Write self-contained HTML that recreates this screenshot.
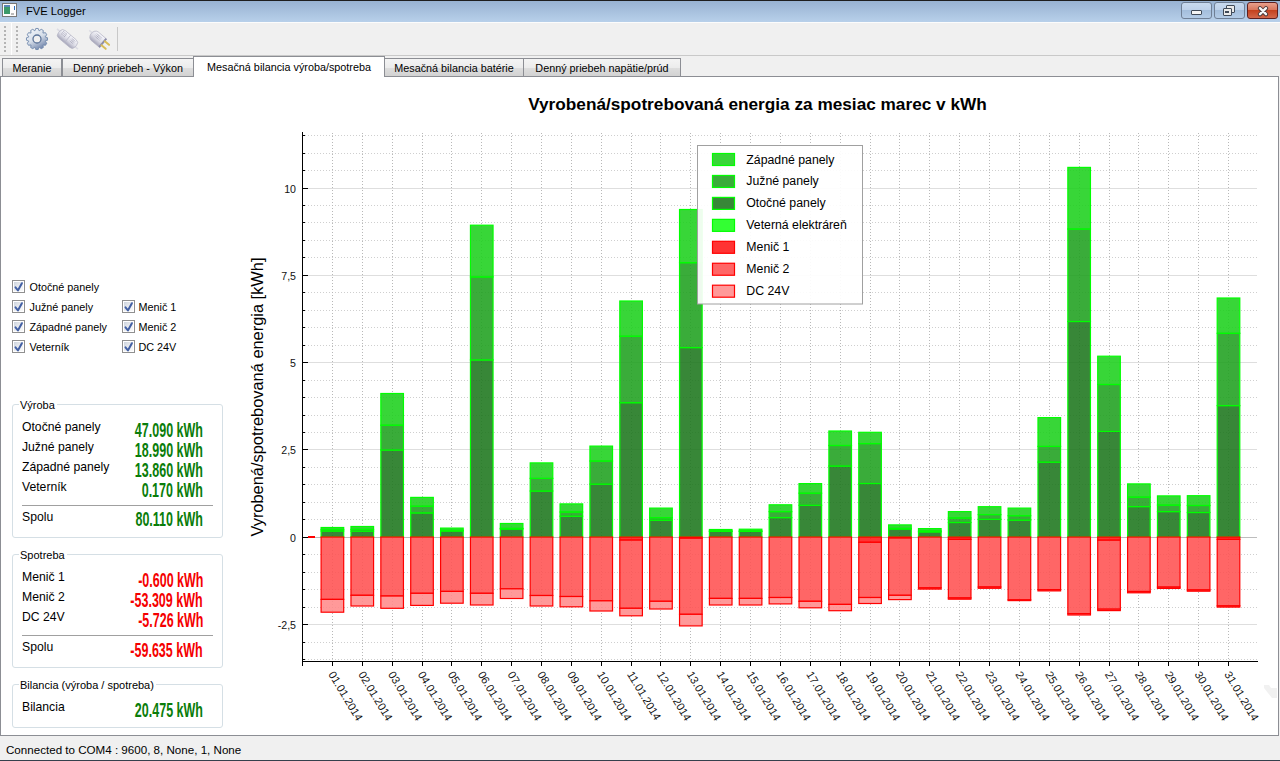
<!DOCTYPE html>
<html><head><meta charset="utf-8">
<style>
*{box-sizing:border-box}
html,body{margin:0;padding:0;width:1280px;height:761px;overflow:hidden;background:#f0f0f0;font-family:"Liberation Sans",sans-serif;color:#000}
.a{position:absolute;white-space:nowrap}
#topline{left:0;top:0;width:1280px;height:1px;background:#1e1e1e}
#titlebar{left:0;top:1px;width:1280px;height:21px;background:linear-gradient(#98b2d2,#b8d0ea)}
#titlebar .t{left:26px;top:3px;font-size:11.2px;color:#000;line-height:14px}
.wbtn{top:2px;height:17px;border:1px solid #6f7f95;border-radius:3px;background:linear-gradient(#c8daef 0%,#bdd1ea 45%,#a4bedc 50%,#b3cbe6 100%)}
#wclose{border-color:#5e2020;background:linear-gradient(#e8a08c 0%,#d8765c 45%,#c4421f 50%,#d3684b 100%)}
#toolbar{left:0;top:22px;width:1280px;height:34px;background:#f0f0f0;border-top:1px solid #fcfcfc;border-bottom:1px solid #c9c9c9}
.grip{width:3px;height:3px;background:#b4b4b4}
.tab{top:58px;height:18px;border:1px solid #8c8e94;border-bottom:none;background:linear-gradient(#f4f4f4 0%,#ececec 50%,#dedede 51%,#d2d2d2 100%);font-size:10.8px;line-height:18px;padding-left:0;text-align:center}
.tab.sel{top:56px;height:21px;background:#fff;z-index:3;line-height:20px}
#pane{left:0;top:76px;width:1279px;height:660px;background:#fff;border:1px solid #8c8e94}
#status{left:6px;top:743px;font-size:11.6px;line-height:14px}
#botline{left:0;top:760px;width:1280px;height:1px;background:#35404c}
.cb{width:13px;height:13px;border:1px solid #8f8f8f;background:#fff}
.cb:before{content:"";position:absolute;left:1px;top:1px;width:9px;height:9px;background:linear-gradient(135deg,#cdd3dc,#eef0f3 60%,#f8f8f8)}
.cb svg{position:absolute;left:1px;top:1px}
.cbl{font-size:10.8px;line-height:13px;margin-top:1px;margin-left:-0.5px}
.gb{border:1px solid #d5dfe5;border-radius:3px}
.gt{font-size:11px;line-height:12px;background:#fff;padding:0 2px 0 1px;margin-top:1px}
.lab{font-size:12.2px;line-height:14px;margin-top:1px}
.val{font-size:20px;font-weight:bold;line-height:20px;transform-origin:100% 0;transform:scaleX(0.625)}
.sep{height:1px;background:#a0a0a0}
</style></head><body>
<div class="a" id="topline"></div>
<div class="a" id="titlebar">
  <svg class="a" style="left:2px;top:2px" width="15" height="14" viewBox="0 0 15 14">
    <rect x="0.5" y="0.5" width="14" height="13" fill="#fdfdfd" stroke="#777"/>
    <rect x="2" y="3" width="6" height="8" fill="#3c9a6a"/>
    <rect x="2" y="2" width="6" height="2" fill="#5a86b8"/>
    <rect x="12" y="3" width="1" height="4" fill="#2b6fc0"/>
    <rect x="9" y="10" width="3" height="2" fill="#bbb"/>
  </svg>
  <div class="a t">FVE Logger</div>
</div>
<div class="a wbtn" style="left:1181px;width:31px"><div class="a" style="left:9px;top:7px;width:11px;height:5px;background:#f4f4f4;border:1px solid #404a58;border-radius:1px"></div></div>
<div class="a wbtn" style="left:1214px;width:31px"><div class="a" style="left:11px;top:2px;width:9px;height:8px;border:1.5px solid #404a58;background:#eaeaea;border-radius:1px"></div><div class="a" style="left:8px;top:5px;width:9px;height:8px;border:1.5px solid #404a58;background:#eaeaea;border-radius:1px"><div class="a" style="left:1px;top:2px;width:4px;height:2px;border:1px solid #404a58"></div></div></div>
<div class="a wbtn" id="wclose" style="left:1247px;width:31px"><svg class="a" style="left:9px;top:2px" width="12" height="12" viewBox="0 0 12 12"><path d="M3 3.2 L9 9.2 M9 3.2 L3 9.2" stroke="#4a3838" stroke-width="4.2" stroke-linecap="round"/><path d="M3 3.2 L9 9.2 M9 3.2 L3 9.2" stroke="#f6f6f6" stroke-width="2.4" stroke-linecap="round"/></svg></div>

<div class="a" id="toolbar"></div>
<div class="a grip" style="left:4px;top:26px;height:2px;width:2px;box-shadow:0 4px #b4b4b4,0 8px #b4b4b4,0 12px #b4b4b4,0 16px #b4b4b4,0 20px #b4b4b4,0 24px #b4b4b4"></div>
<div class="a" style="left:11px;top:23px;width:1px;height:32px;background:#c6c6c6;border-right:1px solid #fff"></div>
<div class="a grip" style="left:16px;top:26px;height:2px;width:2px;box-shadow:0 4px #b4b4b4,0 8px #b4b4b4,0 12px #b4b4b4,0 16px #b4b4b4,0 20px #b4b4b4,0 24px #b4b4b4"></div>
<!-- gear -->
<svg class="a" style="left:25px;top:27px" width="24" height="24" viewBox="0 0 24 24">
  <defs><linearGradient id="gg" x1="0.2" y1="0.1" x2="0.7" y2="1"><stop offset="0" stop-color="#eef2f7"/><stop offset="0.45" stop-color="#d6dee9"/><stop offset="1" stop-color="#6b80a8"/></linearGradient></defs>
  <path d="M9.83 3.89 L10.78 1.47 L13.22 1.47 L14.17 3.89 L14.17 3.89 L16.21 2.27 L18.32 3.49 L17.94 6.06 L17.94 6.06 L20.51 5.68 L21.73 7.79 L20.11 9.83 L20.11 9.83 L22.53 10.78 L22.53 13.22 L20.11 14.17 L20.11 14.17 L21.73 16.21 L20.51 18.32 L17.94 17.94 L17.94 17.94 L18.32 20.51 L16.21 21.73 L14.17 20.11 L14.17 20.11 L13.22 22.53 L10.78 22.53 L9.83 20.11 L9.83 20.11 L7.79 21.73 L5.68 20.51 L6.06 17.94 L6.06 17.94 L3.49 18.32 L2.27 16.21 L3.89 14.17 L3.89 14.17 L1.47 13.22 L1.47 10.78 L3.89 9.83 L3.89 9.83 L2.27 7.79 L3.49 5.68 L6.06 6.06 L6.06 6.06 L5.68 3.49 L7.79 2.27 L9.83 3.89Z" fill="url(#gg)" stroke="#7089ad" stroke-width="0.9" stroke-linejoin="round"/>
  <circle cx="12" cy="12" r="4" fill="#f0f0f0" stroke="#5c7499" stroke-width="1.3"/>
</svg>
<!-- plug 1 -->
<svg class="a" style="left:56px;top:28px" width="24" height="24" viewBox="0 0 24 24">
  <defs><linearGradient id="pg" x1="0" y1="0" x2="0" y2="1"><stop offset="0" stop-color="#f6f6fb"/><stop offset="0.55" stop-color="#dcdce6"/><stop offset="1" stop-color="#a4a4b8"/></linearGradient></defs>
  <g transform="translate(11.5 11) rotate(40)">
    <line x1="-14.5" y1="-1" x2="-10" y2="-1" stroke="#dcdce4" stroke-width="1.6"/>
    <line x1="10" y1="1" x2="14.5" y2="1" stroke="#dcdce4" stroke-width="1.6"/>
    <rect x="-11" y="-5" width="22" height="10" rx="4" fill="url(#pg)" stroke="#b4b4c4" stroke-width="0.7"/>
    <line x1="0" y1="-5" x2="0" y2="5" stroke="#b8b8c8" stroke-width="0.8"/>
    <path d="M-8 -3.2h5M-8 -1.6h5M-8 0h5M3 -3.2h5M3 -1.6h5M3 0h5" stroke="#9c9cb0" stroke-width="0.9" stroke-dasharray="1 0.7"/>
  </g>
</svg>
<!-- plug 2 -->
<svg class="a" style="left:88px;top:28px" width="24" height="24" viewBox="0 0 24 24">
  <g transform="translate(9.8 10.8) rotate(40)">
    <line x1="-12" y1="-1" x2="-7" y2="-1" stroke="#dcdce4" stroke-width="1.6"/>
    <path d="M-4 -5.5 H7 V5.5 H-4 A4.5 5.5 0 0 1 -4 -5.5Z" fill="url(#pg)" stroke="#b4b4c4" stroke-width="0.7"/>
    <rect x="5.5" y="-5.5" width="1.8" height="11" fill="#8c8ca8"/>
    <path d="M-4 -3.2h6M-4 -1.6h6M-4 0h6" stroke="#9c9cb0" stroke-width="0.9" stroke-dasharray="1 0.7"/>
    <line x1="7" y1="-2.6" x2="12.5" y2="-2.6" stroke="#d8bc58" stroke-width="2" stroke-linecap="round"/>
    <line x1="7" y1="2.6" x2="12.5" y2="2.6" stroke="#d8bc58" stroke-width="2" stroke-linecap="round"/>
  </g>
</svg>
<div class="a" style="left:117px;top:27px;width:1px;height:24px;background:#c8c8c8"></div>

<div class="a" id="pane"></div>
<div class="a tab" style="left:2px;width:60px">Meranie</div>
<div class="a tab" style="left:62px;width:132px">Denný priebeh - Výkon</div>
<div class="a tab sel" style="left:193px;width:192px">Mesačná bilancia výroba/spotreba</div>
<div class="a tab" style="left:384px;width:140px">Mesačná bilancia batérie</div>
<div class="a tab" style="left:523px;width:158px">Denný priebeh napätie/prúd</div>

<!-- checkboxes -->
<div class="a cb" style="left:12px;top:280px"><svg width="11" height="11" viewBox="0 0 11 11" overflow="visible"><path d="M1.5 5.4 L3.9 8.4 L7.9 1.2" fill="none" stroke="#4360a4" stroke-width="2" stroke-linecap="round" stroke-linejoin="round"/></svg></div>
<div class="a cbl" style="left:30px;top:280px">Otočné panely</div>
<div class="a cb" style="left:12px;top:300px"><svg width="11" height="11" viewBox="0 0 11 11" overflow="visible"><path d="M1.5 5.4 L3.9 8.4 L7.9 1.2" fill="none" stroke="#4360a4" stroke-width="2" stroke-linecap="round" stroke-linejoin="round"/></svg></div>
<div class="a cbl" style="left:30px;top:300px">Južné panely</div>
<div class="a cb" style="left:12px;top:320px"><svg width="11" height="11" viewBox="0 0 11 11" overflow="visible"><path d="M1.5 5.4 L3.9 8.4 L7.9 1.2" fill="none" stroke="#4360a4" stroke-width="2" stroke-linecap="round" stroke-linejoin="round"/></svg></div>
<div class="a cbl" style="left:30px;top:320px">Západné panely</div>
<div class="a cb" style="left:12px;top:340px"><svg width="11" height="11" viewBox="0 0 11 11" overflow="visible"><path d="M1.5 5.4 L3.9 8.4 L7.9 1.2" fill="none" stroke="#4360a4" stroke-width="2" stroke-linecap="round" stroke-linejoin="round"/></svg></div>
<div class="a cbl" style="left:30px;top:340px">Veterník</div>
<div class="a cb" style="left:122px;top:300px"><svg width="11" height="11" viewBox="0 0 11 11" overflow="visible"><path d="M1.5 5.4 L3.9 8.4 L7.9 1.2" fill="none" stroke="#4360a4" stroke-width="2" stroke-linecap="round" stroke-linejoin="round"/></svg></div>
<div class="a cbl" style="left:139px;top:300px">Menič 1</div>
<div class="a cb" style="left:122px;top:320px"><svg width="11" height="11" viewBox="0 0 11 11" overflow="visible"><path d="M1.5 5.4 L3.9 8.4 L7.9 1.2" fill="none" stroke="#4360a4" stroke-width="2" stroke-linecap="round" stroke-linejoin="round"/></svg></div>
<div class="a cbl" style="left:139px;top:320px">Menič 2</div>
<div class="a cb" style="left:122px;top:340px"><svg width="11" height="11" viewBox="0 0 11 11" overflow="visible"><path d="M1.5 5.4 L3.9 8.4 L7.9 1.2" fill="none" stroke="#4360a4" stroke-width="2" stroke-linecap="round" stroke-linejoin="round"/></svg></div>
<div class="a cbl" style="left:139px;top:340px">DC 24V</div>

<!-- Vyroba group -->
<div class="a gb" style="left:12px;top:404px;width:211px;height:134px"></div>
<div class="a gt" style="left:19px;top:398px">Výroba</div>
<div class="a lab" style="left:22px;top:419px">Otočné panely</div>
<div class="a lab" style="left:22px;top:439px">Južné panely</div>
<div class="a lab" style="left:22px;top:459px">Západné panely</div>
<div class="a lab" style="left:22px;top:479px">Veterník</div>
<div class="a sep" style="left:22px;top:505px;width:191px"></div>
<div class="a lab" style="left:22px;top:509px">Spolu</div>
<div class="a val" style="right:1077px;top:420px;color:#0a7d0a">47.090 kWh</div>
<div class="a val" style="right:1077px;top:440px;color:#0a7d0a">18.990 kWh</div>
<div class="a val" style="right:1077px;top:460px;color:#0a7d0a">13.860 kWh</div>
<div class="a val" style="right:1077px;top:480px;color:#0a7d0a">0.170 kWh</div>
<div class="a val" style="right:1077px;top:509px;color:#0a7d0a">80.110 kWh</div>

<!-- Spotreba group -->
<div class="a gb" style="left:12px;top:554px;width:211px;height:114px"></div>
<div class="a gt" style="left:19px;top:548px">Spotreba</div>
<div class="a lab" style="left:22px;top:569px">Menič 1</div>
<div class="a lab" style="left:22px;top:589px">Menič 2</div>
<div class="a lab" style="left:22px;top:609px">DC 24V</div>
<div class="a sep" style="left:22px;top:635px;width:191px"></div>
<div class="a lab" style="left:22px;top:639px">Spolu</div>
<div class="a val" style="right:1077px;top:570px;color:#f50000">-0.600 kWh</div>
<div class="a val" style="right:1077px;top:590px;color:#f50000">-53.309 kWh</div>
<div class="a val" style="right:1077px;top:610px;color:#f50000">-5.726 kWh</div>
<div class="a val" style="right:1077px;top:640px;color:#f50000">-59.635 kWh</div>

<!-- Bilancia group -->
<div class="a gb" style="left:12px;top:684px;width:211px;height:44px"></div>
<div class="a gt" style="left:19px;top:678px">Bilancia (výroba / spotreba)</div>
<div class="a lab" style="left:22px;top:699px">Bilancia</div>
<div class="a val" style="right:1077px;top:700px;color:#0a7d0a">20.475 kWh</div>

<svg class="a" style="left:1262px;top:683px" width="17" height="16"><path d="M2 2 L7 2 L9 5 L15 5 L15 15 L10 15 L2 5Z" fill="#f1f1f1"/></svg>
<svg width="1280" height="761" viewBox="0 0 1280 761" style="position:absolute;left:0;top:0">
<g shape-rendering="crispEdges"><line x1="302" y1="659.5" x2="1257" y2="659.5" stroke="#cfcfcf" stroke-dasharray="1 2"/><line x1="302" y1="642.5" x2="1257" y2="642.5" stroke="#cfcfcf" stroke-dasharray="1 2"/><line x1="302" y1="607.5" x2="1257" y2="607.5" stroke="#cfcfcf" stroke-dasharray="1 2"/><line x1="302" y1="589.5" x2="1257" y2="589.5" stroke="#cfcfcf" stroke-dasharray="1 2"/><line x1="302" y1="572.5" x2="1257" y2="572.5" stroke="#cfcfcf" stroke-dasharray="1 2"/><line x1="302" y1="554.5" x2="1257" y2="554.5" stroke="#cfcfcf" stroke-dasharray="1 2"/><line x1="302" y1="519.5" x2="1257" y2="519.5" stroke="#cfcfcf" stroke-dasharray="1 2"/><line x1="302" y1="502.5" x2="1257" y2="502.5" stroke="#cfcfcf" stroke-dasharray="1 2"/><line x1="302" y1="484.5" x2="1257" y2="484.5" stroke="#cfcfcf" stroke-dasharray="1 2"/><line x1="302" y1="467.5" x2="1257" y2="467.5" stroke="#cfcfcf" stroke-dasharray="1 2"/><line x1="302" y1="432.5" x2="1257" y2="432.5" stroke="#cfcfcf" stroke-dasharray="1 2"/><line x1="302" y1="415.5" x2="1257" y2="415.5" stroke="#cfcfcf" stroke-dasharray="1 2"/><line x1="302" y1="397.5" x2="1257" y2="397.5" stroke="#cfcfcf" stroke-dasharray="1 2"/><line x1="302" y1="380.5" x2="1257" y2="380.5" stroke="#cfcfcf" stroke-dasharray="1 2"/><line x1="302" y1="345.5" x2="1257" y2="345.5" stroke="#cfcfcf" stroke-dasharray="1 2"/><line x1="302" y1="327.5" x2="1257" y2="327.5" stroke="#cfcfcf" stroke-dasharray="1 2"/><line x1="302" y1="310.5" x2="1257" y2="310.5" stroke="#cfcfcf" stroke-dasharray="1 2"/><line x1="302" y1="292.5" x2="1257" y2="292.5" stroke="#cfcfcf" stroke-dasharray="1 2"/><line x1="302" y1="257.5" x2="1257" y2="257.5" stroke="#cfcfcf" stroke-dasharray="1 2"/><line x1="302" y1="240.5" x2="1257" y2="240.5" stroke="#cfcfcf" stroke-dasharray="1 2"/><line x1="302" y1="222.5" x2="1257" y2="222.5" stroke="#cfcfcf" stroke-dasharray="1 2"/><line x1="302" y1="205.5" x2="1257" y2="205.5" stroke="#cfcfcf" stroke-dasharray="1 2"/><line x1="302" y1="170.5" x2="1257" y2="170.5" stroke="#cfcfcf" stroke-dasharray="1 2"/><line x1="302" y1="153.5" x2="1257" y2="153.5" stroke="#cfcfcf" stroke-dasharray="1 2"/><line x1="302" y1="135.5" x2="1257" y2="135.5" stroke="#cfcfcf" stroke-dasharray="1 2"/><line x1="332.5" y1="133" x2="332.5" y2="661" stroke="#b8b8b8" stroke-dasharray="1 2"/><line x1="362.5" y1="133" x2="362.5" y2="661" stroke="#b8b8b8" stroke-dasharray="1 2"/><line x1="392.5" y1="133" x2="392.5" y2="661" stroke="#b8b8b8" stroke-dasharray="1 2"/><line x1="422.5" y1="133" x2="422.5" y2="661" stroke="#b8b8b8" stroke-dasharray="1 2"/><line x1="451.5" y1="133" x2="451.5" y2="661" stroke="#b8b8b8" stroke-dasharray="1 2"/><line x1="481.5" y1="133" x2="481.5" y2="661" stroke="#b8b8b8" stroke-dasharray="1 2"/><line x1="511.5" y1="133" x2="511.5" y2="661" stroke="#b8b8b8" stroke-dasharray="1 2"/><line x1="541.5" y1="133" x2="541.5" y2="661" stroke="#b8b8b8" stroke-dasharray="1 2"/><line x1="571.5" y1="133" x2="571.5" y2="661" stroke="#b8b8b8" stroke-dasharray="1 2"/><line x1="601.5" y1="133" x2="601.5" y2="661" stroke="#b8b8b8" stroke-dasharray="1 2"/><line x1="631.5" y1="133" x2="631.5" y2="661" stroke="#b8b8b8" stroke-dasharray="1 2"/><line x1="660.5" y1="133" x2="660.5" y2="661" stroke="#b8b8b8" stroke-dasharray="1 2"/><line x1="690.5" y1="133" x2="690.5" y2="661" stroke="#b8b8b8" stroke-dasharray="1 2"/><line x1="720.5" y1="133" x2="720.5" y2="661" stroke="#b8b8b8" stroke-dasharray="1 2"/><line x1="750.5" y1="133" x2="750.5" y2="661" stroke="#b8b8b8" stroke-dasharray="1 2"/><line x1="780.5" y1="133" x2="780.5" y2="661" stroke="#b8b8b8" stroke-dasharray="1 2"/><line x1="810.5" y1="133" x2="810.5" y2="661" stroke="#b8b8b8" stroke-dasharray="1 2"/><line x1="840.5" y1="133" x2="840.5" y2="661" stroke="#b8b8b8" stroke-dasharray="1 2"/><line x1="870.5" y1="133" x2="870.5" y2="661" stroke="#b8b8b8" stroke-dasharray="1 2"/><line x1="899.5" y1="133" x2="899.5" y2="661" stroke="#b8b8b8" stroke-dasharray="1 2"/><line x1="929.5" y1="133" x2="929.5" y2="661" stroke="#b8b8b8" stroke-dasharray="1 2"/><line x1="959.5" y1="133" x2="959.5" y2="661" stroke="#b8b8b8" stroke-dasharray="1 2"/><line x1="989.5" y1="133" x2="989.5" y2="661" stroke="#b8b8b8" stroke-dasharray="1 2"/><line x1="1019.5" y1="133" x2="1019.5" y2="661" stroke="#b8b8b8" stroke-dasharray="1 2"/><line x1="1049.5" y1="133" x2="1049.5" y2="661" stroke="#b8b8b8" stroke-dasharray="1 2"/><line x1="1079.5" y1="133" x2="1079.5" y2="661" stroke="#b8b8b8" stroke-dasharray="1 2"/><line x1="1109.5" y1="133" x2="1109.5" y2="661" stroke="#b8b8b8" stroke-dasharray="1 2"/><line x1="1138.5" y1="133" x2="1138.5" y2="661" stroke="#b8b8b8" stroke-dasharray="1 2"/><line x1="1168.5" y1="133" x2="1168.5" y2="661" stroke="#b8b8b8" stroke-dasharray="1 2"/><line x1="1198.5" y1="133" x2="1198.5" y2="661" stroke="#b8b8b8" stroke-dasharray="1 2"/><line x1="1228.5" y1="133" x2="1228.5" y2="661" stroke="#b8b8b8" stroke-dasharray="1 2"/><line x1="303" y1="188.5" x2="1257" y2="188.5" stroke="#dedede"/><line x1="303" y1="275.5" x2="1257" y2="275.5" stroke="#dedede"/><line x1="303" y1="362.5" x2="1257" y2="362.5" stroke="#dedede"/><line x1="303" y1="449.5" x2="1257" y2="449.5" stroke="#dedede"/><line x1="303" y1="537.5" x2="1257" y2="537.5" stroke="#bdbdbd"/><line x1="303" y1="624.5" x2="1257" y2="624.5" stroke="#dedede"/></g>
<g><rect x="321.10" y="531.00" width="22.60" height="6.00" fill="#1d761d" fill-opacity="0.88" stroke="#00ff00" stroke-width="1.2"/><rect x="321.10" y="529.50" width="22.60" height="1.50" fill="#1fa01f" fill-opacity="0.88" stroke="#00ff00" stroke-width="1.2"/><rect x="321.10" y="527.50" width="22.60" height="2.00" fill="#1cd01c" fill-opacity="0.88" stroke="#00ff00" stroke-width="1.2"/><rect x="321.10" y="537.00" width="22.60" height="62.40" fill="#ff5151" fill-opacity="0.88" stroke="#ff0000" stroke-width="1.2"/><rect x="321.10" y="599.40" width="22.60" height="12.80" fill="#ff8b8b" fill-opacity="0.88" stroke="#ff0000" stroke-width="1.2"/><rect x="350.97" y="531.10" width="22.60" height="5.90" fill="#1d761d" fill-opacity="0.88" stroke="#00ff00" stroke-width="1.2"/><rect x="350.97" y="529.40" width="22.60" height="1.70" fill="#1fa01f" fill-opacity="0.88" stroke="#00ff00" stroke-width="1.2"/><rect x="350.97" y="526.50" width="22.60" height="2.90" fill="#1cd01c" fill-opacity="0.88" stroke="#00ff00" stroke-width="1.2"/><rect x="350.97" y="537.00" width="22.60" height="58.30" fill="#ff5151" fill-opacity="0.88" stroke="#ff0000" stroke-width="1.2"/><rect x="350.97" y="595.30" width="22.60" height="10.70" fill="#ff8b8b" fill-opacity="0.88" stroke="#ff0000" stroke-width="1.2"/><rect x="380.84" y="450.00" width="22.60" height="87.00" fill="#1d761d" fill-opacity="0.88" stroke="#00ff00" stroke-width="1.2"/><rect x="380.84" y="425.20" width="22.60" height="24.80" fill="#1fa01f" fill-opacity="0.88" stroke="#00ff00" stroke-width="1.2"/><rect x="380.84" y="393.50" width="22.60" height="31.70" fill="#1cd01c" fill-opacity="0.88" stroke="#00ff00" stroke-width="1.2"/><rect x="380.84" y="537.00" width="22.60" height="59.00" fill="#ff5151" fill-opacity="0.88" stroke="#ff0000" stroke-width="1.2"/><rect x="380.84" y="596.00" width="22.60" height="12.30" fill="#ff8b8b" fill-opacity="0.88" stroke="#ff0000" stroke-width="1.2"/><rect x="410.71" y="512.90" width="22.60" height="24.10" fill="#1d761d" fill-opacity="0.88" stroke="#00ff00" stroke-width="1.2"/><rect x="410.71" y="506.20" width="22.60" height="6.70" fill="#1fa01f" fill-opacity="0.88" stroke="#00ff00" stroke-width="1.2"/><rect x="410.71" y="497.40" width="22.60" height="8.80" fill="#1cd01c" fill-opacity="0.88" stroke="#00ff00" stroke-width="1.2"/><rect x="410.71" y="537.00" width="22.60" height="56.30" fill="#ff5151" fill-opacity="0.88" stroke="#ff0000" stroke-width="1.2"/><rect x="410.71" y="593.30" width="22.60" height="12.10" fill="#ff8b8b" fill-opacity="0.88" stroke="#ff0000" stroke-width="1.2"/><rect x="440.58" y="531.00" width="22.60" height="6.00" fill="#1d761d" fill-opacity="0.88" stroke="#00ff00" stroke-width="1.2"/><rect x="440.58" y="530.30" width="22.60" height="0.70" fill="#1fa01f" fill-opacity="0.88" stroke="#00ff00" stroke-width="1.2"/><rect x="440.58" y="528.10" width="22.60" height="2.20" fill="#1cd01c" fill-opacity="0.88" stroke="#00ff00" stroke-width="1.2"/><rect x="440.58" y="537.00" width="22.60" height="54.40" fill="#ff5151" fill-opacity="0.88" stroke="#ff0000" stroke-width="1.2"/><rect x="440.58" y="591.40" width="22.60" height="11.80" fill="#ff8b8b" fill-opacity="0.88" stroke="#ff0000" stroke-width="1.2"/><rect x="470.45" y="359.90" width="22.60" height="177.10" fill="#1d761d" fill-opacity="0.88" stroke="#00ff00" stroke-width="1.2"/><rect x="470.45" y="276.90" width="22.60" height="83.00" fill="#1fa01f" fill-opacity="0.88" stroke="#00ff00" stroke-width="1.2"/><rect x="470.45" y="225.20" width="22.60" height="51.70" fill="#1cd01c" fill-opacity="0.88" stroke="#00ff00" stroke-width="1.2"/><rect x="470.45" y="537.00" width="22.60" height="56.30" fill="#ff5151" fill-opacity="0.88" stroke="#ff0000" stroke-width="1.2"/><rect x="470.45" y="593.30" width="22.60" height="11.70" fill="#ff8b8b" fill-opacity="0.88" stroke="#ff0000" stroke-width="1.2"/><rect x="500.32" y="529.00" width="22.60" height="8.00" fill="#1d761d" fill-opacity="0.88" stroke="#00ff00" stroke-width="1.2"/><rect x="500.32" y="528.40" width="22.60" height="0.60" fill="#1fa01f" fill-opacity="0.88" stroke="#00ff00" stroke-width="1.2"/><rect x="500.32" y="523.50" width="22.60" height="4.90" fill="#1cd01c" fill-opacity="0.88" stroke="#00ff00" stroke-width="1.2"/><rect x="500.32" y="537.00" width="22.60" height="51.80" fill="#ff5151" fill-opacity="0.88" stroke="#ff0000" stroke-width="1.2"/><rect x="500.32" y="588.80" width="22.60" height="9.70" fill="#ff8b8b" fill-opacity="0.88" stroke="#ff0000" stroke-width="1.2"/><rect x="530.19" y="491.00" width="22.60" height="46.00" fill="#1d761d" fill-opacity="0.88" stroke="#00ff00" stroke-width="1.2"/><rect x="530.19" y="478.40" width="22.60" height="12.60" fill="#1fa01f" fill-opacity="0.88" stroke="#00ff00" stroke-width="1.2"/><rect x="530.19" y="462.90" width="22.60" height="15.50" fill="#1cd01c" fill-opacity="0.88" stroke="#00ff00" stroke-width="1.2"/><rect x="530.19" y="537.00" width="22.60" height="58.50" fill="#ff5151" fill-opacity="0.88" stroke="#ff0000" stroke-width="1.2"/><rect x="530.19" y="595.50" width="22.60" height="10.50" fill="#ff8b8b" fill-opacity="0.88" stroke="#ff0000" stroke-width="1.2"/><rect x="560.06" y="516.20" width="22.60" height="20.80" fill="#1d761d" fill-opacity="0.88" stroke="#00ff00" stroke-width="1.2"/><rect x="560.06" y="512.00" width="22.60" height="4.20" fill="#1fa01f" fill-opacity="0.88" stroke="#00ff00" stroke-width="1.2"/><rect x="560.06" y="503.90" width="22.60" height="8.10" fill="#1cd01c" fill-opacity="0.88" stroke="#00ff00" stroke-width="1.2"/><rect x="560.06" y="537.00" width="22.60" height="59.50" fill="#ff5151" fill-opacity="0.88" stroke="#ff0000" stroke-width="1.2"/><rect x="560.06" y="596.50" width="22.60" height="10.30" fill="#ff8b8b" fill-opacity="0.88" stroke="#ff0000" stroke-width="1.2"/><rect x="589.93" y="484.10" width="22.60" height="52.90" fill="#1d761d" fill-opacity="0.88" stroke="#00ff00" stroke-width="1.2"/><rect x="589.93" y="461.00" width="22.60" height="23.10" fill="#1fa01f" fill-opacity="0.88" stroke="#00ff00" stroke-width="1.2"/><rect x="589.93" y="446.10" width="22.60" height="14.90" fill="#1cd01c" fill-opacity="0.88" stroke="#00ff00" stroke-width="1.2"/><rect x="589.93" y="537.00" width="22.60" height="63.80" fill="#ff5151" fill-opacity="0.88" stroke="#ff0000" stroke-width="1.2"/><rect x="589.93" y="600.80" width="22.60" height="10.20" fill="#ff8b8b" fill-opacity="0.88" stroke="#ff0000" stroke-width="1.2"/><rect x="619.80" y="402.70" width="22.60" height="134.30" fill="#1d761d" fill-opacity="0.88" stroke="#00ff00" stroke-width="1.2"/><rect x="619.80" y="336.20" width="22.60" height="66.50" fill="#1fa01f" fill-opacity="0.88" stroke="#00ff00" stroke-width="1.2"/><rect x="619.80" y="301.00" width="22.60" height="35.20" fill="#1cd01c" fill-opacity="0.88" stroke="#00ff00" stroke-width="1.2"/><rect x="619.80" y="537.00" width="22.60" height="3.10" fill="#ff1717" fill-opacity="0.88" stroke="#ff0000" stroke-width="1.2"/><rect x="619.80" y="540.10" width="22.60" height="68.20" fill="#ff5151" fill-opacity="0.88" stroke="#ff0000" stroke-width="1.2"/><rect x="619.80" y="608.30" width="22.60" height="7.50" fill="#ff8b8b" fill-opacity="0.88" stroke="#ff0000" stroke-width="1.2"/><rect x="649.67" y="520.20" width="22.60" height="16.80" fill="#1d761d" fill-opacity="0.88" stroke="#00ff00" stroke-width="1.2"/><rect x="649.67" y="517.70" width="22.60" height="2.50" fill="#1fa01f" fill-opacity="0.88" stroke="#00ff00" stroke-width="1.2"/><rect x="649.67" y="508.10" width="22.60" height="9.60" fill="#1cd01c" fill-opacity="0.88" stroke="#00ff00" stroke-width="1.2"/><rect x="649.67" y="537.00" width="22.60" height="64.30" fill="#ff5151" fill-opacity="0.88" stroke="#ff0000" stroke-width="1.2"/><rect x="649.67" y="601.30" width="22.60" height="7.70" fill="#ff8b8b" fill-opacity="0.88" stroke="#ff0000" stroke-width="1.2"/><rect x="679.54" y="347.60" width="22.60" height="189.40" fill="#1d761d" fill-opacity="0.88" stroke="#00ff00" stroke-width="1.2"/><rect x="679.54" y="262.70" width="22.60" height="84.90" fill="#1fa01f" fill-opacity="0.88" stroke="#00ff00" stroke-width="1.2"/><rect x="679.54" y="209.50" width="22.60" height="53.20" fill="#1cd01c" fill-opacity="0.88" stroke="#00ff00" stroke-width="1.2"/><rect x="679.54" y="537.00" width="22.60" height="1.20" fill="#ff1717" fill-opacity="0.88" stroke="#ff0000" stroke-width="1.2"/><rect x="679.54" y="538.20" width="22.60" height="76.10" fill="#ff5151" fill-opacity="0.88" stroke="#ff0000" stroke-width="1.2"/><rect x="679.54" y="614.30" width="22.60" height="11.60" fill="#ff8b8b" fill-opacity="0.88" stroke="#ff0000" stroke-width="1.2"/><rect x="709.41" y="531.40" width="22.60" height="5.60" fill="#1d761d" fill-opacity="0.88" stroke="#00ff00" stroke-width="1.2"/><rect x="709.41" y="531.00" width="22.60" height="0.40" fill="#1fa01f" fill-opacity="0.88" stroke="#00ff00" stroke-width="1.2"/><rect x="709.41" y="529.50" width="22.60" height="1.50" fill="#1cd01c" fill-opacity="0.88" stroke="#00ff00" stroke-width="1.2"/><rect x="709.41" y="537.00" width="22.60" height="61.40" fill="#ff5151" fill-opacity="0.88" stroke="#ff0000" stroke-width="1.2"/><rect x="709.41" y="598.40" width="22.60" height="6.60" fill="#ff8b8b" fill-opacity="0.88" stroke="#ff0000" stroke-width="1.2"/><rect x="739.28" y="531.40" width="22.60" height="5.60" fill="#1d761d" fill-opacity="0.88" stroke="#00ff00" stroke-width="1.2"/><rect x="739.28" y="531.00" width="22.60" height="0.40" fill="#1fa01f" fill-opacity="0.88" stroke="#00ff00" stroke-width="1.2"/><rect x="739.28" y="529.20" width="22.60" height="1.80" fill="#1cd01c" fill-opacity="0.88" stroke="#00ff00" stroke-width="1.2"/><rect x="739.28" y="537.00" width="22.60" height="61.40" fill="#ff5151" fill-opacity="0.88" stroke="#ff0000" stroke-width="1.2"/><rect x="739.28" y="598.40" width="22.60" height="6.60" fill="#ff8b8b" fill-opacity="0.88" stroke="#ff0000" stroke-width="1.2"/><rect x="769.15" y="517.60" width="22.60" height="19.40" fill="#1d761d" fill-opacity="0.88" stroke="#00ff00" stroke-width="1.2"/><rect x="769.15" y="511.60" width="22.60" height="6.00" fill="#1fa01f" fill-opacity="0.88" stroke="#00ff00" stroke-width="1.2"/><rect x="769.15" y="504.80" width="22.60" height="6.80" fill="#1cd01c" fill-opacity="0.88" stroke="#00ff00" stroke-width="1.2"/><rect x="769.15" y="537.00" width="22.60" height="60.50" fill="#ff5151" fill-opacity="0.88" stroke="#ff0000" stroke-width="1.2"/><rect x="769.15" y="597.50" width="22.60" height="6.40" fill="#ff8b8b" fill-opacity="0.88" stroke="#ff0000" stroke-width="1.2"/><rect x="799.02" y="505.30" width="22.60" height="31.70" fill="#1d761d" fill-opacity="0.88" stroke="#00ff00" stroke-width="1.2"/><rect x="799.02" y="493.20" width="22.60" height="12.10" fill="#1fa01f" fill-opacity="0.88" stroke="#00ff00" stroke-width="1.2"/><rect x="799.02" y="483.60" width="22.60" height="9.60" fill="#1cd01c" fill-opacity="0.88" stroke="#00ff00" stroke-width="1.2"/><rect x="799.02" y="537.00" width="22.60" height="64.30" fill="#ff5151" fill-opacity="0.88" stroke="#ff0000" stroke-width="1.2"/><rect x="799.02" y="601.30" width="22.60" height="6.50" fill="#ff8b8b" fill-opacity="0.88" stroke="#ff0000" stroke-width="1.2"/><rect x="828.89" y="466.00" width="22.60" height="71.00" fill="#1d761d" fill-opacity="0.88" stroke="#00ff00" stroke-width="1.2"/><rect x="828.89" y="445.50" width="22.60" height="20.50" fill="#1fa01f" fill-opacity="0.88" stroke="#00ff00" stroke-width="1.2"/><rect x="828.89" y="431.00" width="22.60" height="14.50" fill="#1cd01c" fill-opacity="0.88" stroke="#00ff00" stroke-width="1.2"/><rect x="828.89" y="537.00" width="22.60" height="67.40" fill="#ff5151" fill-opacity="0.88" stroke="#ff0000" stroke-width="1.2"/><rect x="828.89" y="604.40" width="22.60" height="6.30" fill="#ff8b8b" fill-opacity="0.88" stroke="#ff0000" stroke-width="1.2"/><rect x="858.76" y="483.50" width="22.60" height="53.50" fill="#1d761d" fill-opacity="0.88" stroke="#00ff00" stroke-width="1.2"/><rect x="858.76" y="443.60" width="22.60" height="39.90" fill="#1fa01f" fill-opacity="0.88" stroke="#00ff00" stroke-width="1.2"/><rect x="858.76" y="432.30" width="22.60" height="11.30" fill="#1cd01c" fill-opacity="0.88" stroke="#00ff00" stroke-width="1.2"/><rect x="858.76" y="537.00" width="22.60" height="5.30" fill="#ff1717" fill-opacity="0.88" stroke="#ff0000" stroke-width="1.2"/><rect x="858.76" y="542.30" width="22.60" height="55.20" fill="#ff5151" fill-opacity="0.88" stroke="#ff0000" stroke-width="1.2"/><rect x="858.76" y="597.50" width="22.60" height="6.00" fill="#ff8b8b" fill-opacity="0.88" stroke="#ff0000" stroke-width="1.2"/><rect x="888.63" y="529.00" width="22.60" height="8.00" fill="#1d761d" fill-opacity="0.88" stroke="#00ff00" stroke-width="1.2"/><rect x="888.63" y="528.40" width="22.60" height="0.60" fill="#1fa01f" fill-opacity="0.88" stroke="#00ff00" stroke-width="1.2"/><rect x="888.63" y="524.90" width="22.60" height="3.50" fill="#1cd01c" fill-opacity="0.88" stroke="#00ff00" stroke-width="1.2"/><rect x="888.63" y="537.00" width="22.60" height="1.00" fill="#ff1717" fill-opacity="0.88" stroke="#ff0000" stroke-width="1.2"/><rect x="888.63" y="538.00" width="22.60" height="57.30" fill="#ff5151" fill-opacity="0.88" stroke="#ff0000" stroke-width="1.2"/><rect x="888.63" y="595.30" width="22.60" height="4.30" fill="#ff8b8b" fill-opacity="0.88" stroke="#ff0000" stroke-width="1.2"/><rect x="918.50" y="531.90" width="22.60" height="5.10" fill="#1d761d" fill-opacity="0.88" stroke="#00ff00" stroke-width="1.2"/><rect x="918.50" y="531.00" width="22.60" height="0.90" fill="#1fa01f" fill-opacity="0.88" stroke="#00ff00" stroke-width="1.2"/><rect x="918.50" y="528.60" width="22.60" height="2.40" fill="#1cd01c" fill-opacity="0.88" stroke="#00ff00" stroke-width="1.2"/><rect x="918.50" y="537.00" width="22.60" height="50.80" fill="#ff5151" fill-opacity="0.88" stroke="#ff0000" stroke-width="1.2"/><rect x="918.50" y="587.80" width="22.60" height="1.30" fill="#ff8b8b" fill-opacity="0.88" stroke="#ff0000" stroke-width="1.2"/><rect x="948.37" y="522.50" width="22.60" height="14.50" fill="#1d761d" fill-opacity="0.88" stroke="#00ff00" stroke-width="1.2"/><rect x="948.37" y="518.00" width="22.60" height="4.50" fill="#1fa01f" fill-opacity="0.88" stroke="#00ff00" stroke-width="1.2"/><rect x="948.37" y="511.60" width="22.60" height="6.40" fill="#1cd01c" fill-opacity="0.88" stroke="#00ff00" stroke-width="1.2"/><rect x="948.37" y="537.00" width="22.60" height="2.40" fill="#ff1717" fill-opacity="0.88" stroke="#ff0000" stroke-width="1.2"/><rect x="948.37" y="539.40" width="22.60" height="58.50" fill="#ff5151" fill-opacity="0.88" stroke="#ff0000" stroke-width="1.2"/><rect x="948.37" y="597.90" width="22.60" height="1.30" fill="#ff8b8b" fill-opacity="0.88" stroke="#ff0000" stroke-width="1.2"/><rect x="978.24" y="519.30" width="22.60" height="17.70" fill="#1d761d" fill-opacity="0.88" stroke="#00ff00" stroke-width="1.2"/><rect x="978.24" y="514.60" width="22.60" height="4.70" fill="#1fa01f" fill-opacity="0.88" stroke="#00ff00" stroke-width="1.2"/><rect x="978.24" y="506.70" width="22.60" height="7.90" fill="#1cd01c" fill-opacity="0.88" stroke="#00ff00" stroke-width="1.2"/><rect x="978.24" y="537.00" width="22.60" height="50.00" fill="#ff5151" fill-opacity="0.88" stroke="#ff0000" stroke-width="1.2"/><rect x="978.24" y="587.00" width="22.60" height="1.30" fill="#ff8b8b" fill-opacity="0.88" stroke="#ff0000" stroke-width="1.2"/><rect x="1008.11" y="520.10" width="22.60" height="16.90" fill="#1d761d" fill-opacity="0.88" stroke="#00ff00" stroke-width="1.2"/><rect x="1008.11" y="515.70" width="22.60" height="4.40" fill="#1fa01f" fill-opacity="0.88" stroke="#00ff00" stroke-width="1.2"/><rect x="1008.11" y="508.10" width="22.60" height="7.60" fill="#1cd01c" fill-opacity="0.88" stroke="#00ff00" stroke-width="1.2"/><rect x="1008.11" y="537.00" width="22.60" height="62.80" fill="#ff5151" fill-opacity="0.88" stroke="#ff0000" stroke-width="1.2"/><rect x="1008.11" y="599.80" width="22.60" height="0.80" fill="#ff8b8b" fill-opacity="0.88" stroke="#ff0000" stroke-width="1.2"/><rect x="1037.98" y="462.10" width="22.60" height="74.90" fill="#1d761d" fill-opacity="0.88" stroke="#00ff00" stroke-width="1.2"/><rect x="1037.98" y="446.40" width="22.60" height="15.70" fill="#1fa01f" fill-opacity="0.88" stroke="#00ff00" stroke-width="1.2"/><rect x="1037.98" y="417.60" width="22.60" height="28.80" fill="#1cd01c" fill-opacity="0.88" stroke="#00ff00" stroke-width="1.2"/><rect x="1037.98" y="537.00" width="22.60" height="52.60" fill="#ff5151" fill-opacity="0.88" stroke="#ff0000" stroke-width="1.2"/><rect x="1037.98" y="589.60" width="22.60" height="1.30" fill="#ff8b8b" fill-opacity="0.88" stroke="#ff0000" stroke-width="1.2"/><rect x="1067.85" y="321.50" width="22.60" height="215.50" fill="#1d761d" fill-opacity="0.88" stroke="#00ff00" stroke-width="1.2"/><rect x="1067.85" y="229.00" width="22.60" height="92.50" fill="#1fa01f" fill-opacity="0.88" stroke="#00ff00" stroke-width="1.2"/><rect x="1067.85" y="167.40" width="22.60" height="61.60" fill="#1cd01c" fill-opacity="0.88" stroke="#00ff00" stroke-width="1.2"/><rect x="1067.85" y="537.00" width="22.60" height="76.60" fill="#ff5151" fill-opacity="0.88" stroke="#ff0000" stroke-width="1.2"/><rect x="1067.85" y="613.60" width="22.60" height="1.40" fill="#ff8b8b" fill-opacity="0.88" stroke="#ff0000" stroke-width="1.2"/><rect x="1097.72" y="431.40" width="22.60" height="105.60" fill="#1d761d" fill-opacity="0.88" stroke="#00ff00" stroke-width="1.2"/><rect x="1097.72" y="384.50" width="22.60" height="46.90" fill="#1fa01f" fill-opacity="0.88" stroke="#00ff00" stroke-width="1.2"/><rect x="1097.72" y="356.20" width="22.60" height="28.30" fill="#1cd01c" fill-opacity="0.88" stroke="#00ff00" stroke-width="1.2"/><rect x="1097.72" y="537.00" width="22.60" height="3.20" fill="#ff1717" fill-opacity="0.88" stroke="#ff0000" stroke-width="1.2"/><rect x="1097.72" y="540.20" width="22.60" height="69.00" fill="#ff5151" fill-opacity="0.88" stroke="#ff0000" stroke-width="1.2"/><rect x="1097.72" y="609.20" width="22.60" height="1.40" fill="#ff8b8b" fill-opacity="0.88" stroke="#ff0000" stroke-width="1.2"/><rect x="1127.59" y="506.60" width="22.60" height="30.40" fill="#1d761d" fill-opacity="0.88" stroke="#00ff00" stroke-width="1.2"/><rect x="1127.59" y="497.10" width="22.60" height="9.50" fill="#1fa01f" fill-opacity="0.88" stroke="#00ff00" stroke-width="1.2"/><rect x="1127.59" y="483.90" width="22.60" height="13.20" fill="#1cd01c" fill-opacity="0.88" stroke="#00ff00" stroke-width="1.2"/><rect x="1127.59" y="537.00" width="22.60" height="54.50" fill="#ff5151" fill-opacity="0.88" stroke="#ff0000" stroke-width="1.2"/><rect x="1127.59" y="591.50" width="22.60" height="1.30" fill="#ff8b8b" fill-opacity="0.88" stroke="#ff0000" stroke-width="1.2"/><rect x="1157.46" y="511.60" width="22.60" height="25.40" fill="#1d761d" fill-opacity="0.88" stroke="#00ff00" stroke-width="1.2"/><rect x="1157.46" y="505.10" width="22.60" height="6.50" fill="#1fa01f" fill-opacity="0.88" stroke="#00ff00" stroke-width="1.2"/><rect x="1157.46" y="495.90" width="22.60" height="9.20" fill="#1cd01c" fill-opacity="0.88" stroke="#00ff00" stroke-width="1.2"/><rect x="1157.46" y="537.00" width="22.60" height="50.10" fill="#ff5151" fill-opacity="0.88" stroke="#ff0000" stroke-width="1.2"/><rect x="1157.46" y="587.10" width="22.60" height="1.30" fill="#ff8b8b" fill-opacity="0.88" stroke="#ff0000" stroke-width="1.2"/><rect x="1187.33" y="512.50" width="22.60" height="24.50" fill="#1d761d" fill-opacity="0.88" stroke="#00ff00" stroke-width="1.2"/><rect x="1187.33" y="505.50" width="22.60" height="7.00" fill="#1fa01f" fill-opacity="0.88" stroke="#00ff00" stroke-width="1.2"/><rect x="1187.33" y="495.70" width="22.60" height="9.80" fill="#1cd01c" fill-opacity="0.88" stroke="#00ff00" stroke-width="1.2"/><rect x="1187.33" y="537.00" width="22.60" height="52.90" fill="#ff5151" fill-opacity="0.88" stroke="#ff0000" stroke-width="1.2"/><rect x="1187.33" y="589.90" width="22.60" height="1.30" fill="#ff8b8b" fill-opacity="0.88" stroke="#ff0000" stroke-width="1.2"/><rect x="1217.20" y="405.60" width="22.60" height="131.40" fill="#1d761d" fill-opacity="0.88" stroke="#00ff00" stroke-width="1.2"/><rect x="1217.20" y="333.30" width="22.60" height="72.30" fill="#1fa01f" fill-opacity="0.88" stroke="#00ff00" stroke-width="1.2"/><rect x="1217.20" y="298.00" width="22.60" height="35.30" fill="#1cd01c" fill-opacity="0.88" stroke="#00ff00" stroke-width="1.2"/><rect x="1217.20" y="537.00" width="22.60" height="2.40" fill="#ff1717" fill-opacity="0.88" stroke="#ff0000" stroke-width="1.2"/><rect x="1217.20" y="539.40" width="22.60" height="66.40" fill="#ff5151" fill-opacity="0.88" stroke="#ff0000" stroke-width="1.2"/><rect x="1217.20" y="605.80" width="22.60" height="1.30" fill="#ff8b8b" fill-opacity="0.88" stroke="#ff0000" stroke-width="1.2"/></g>
<g shape-rendering="crispEdges"><line x1="302.5" y1="132" x2="302.5" y2="665.5" stroke="#000"/><line x1="302" y1="661.5" x2="1258" y2="661.5" stroke="#000"/><line x1="303" y1="659.5" x2="305" y2="659.5" stroke="#000"/><line x1="303" y1="642.5" x2="305" y2="642.5" stroke="#000"/><line x1="303" y1="624.5" x2="308" y2="624.5" stroke="#000"/><line x1="303" y1="607.5" x2="305" y2="607.5" stroke="#000"/><line x1="303" y1="589.5" x2="305" y2="589.5" stroke="#000"/><line x1="303" y1="572.5" x2="305" y2="572.5" stroke="#000"/><line x1="303" y1="554.5" x2="305" y2="554.5" stroke="#000"/><line x1="303" y1="537.5" x2="308" y2="537.5" stroke="#000"/><line x1="303" y1="519.5" x2="305" y2="519.5" stroke="#000"/><line x1="303" y1="502.5" x2="305" y2="502.5" stroke="#000"/><line x1="303" y1="484.5" x2="305" y2="484.5" stroke="#000"/><line x1="303" y1="467.5" x2="305" y2="467.5" stroke="#000"/><line x1="303" y1="449.5" x2="308" y2="449.5" stroke="#000"/><line x1="303" y1="432.5" x2="305" y2="432.5" stroke="#000"/><line x1="303" y1="415.5" x2="305" y2="415.5" stroke="#000"/><line x1="303" y1="397.5" x2="305" y2="397.5" stroke="#000"/><line x1="303" y1="380.5" x2="305" y2="380.5" stroke="#000"/><line x1="303" y1="362.5" x2="308" y2="362.5" stroke="#000"/><line x1="303" y1="345.5" x2="305" y2="345.5" stroke="#000"/><line x1="303" y1="327.5" x2="305" y2="327.5" stroke="#000"/><line x1="303" y1="310.5" x2="305" y2="310.5" stroke="#000"/><line x1="303" y1="292.5" x2="305" y2="292.5" stroke="#000"/><line x1="303" y1="275.5" x2="308" y2="275.5" stroke="#000"/><line x1="303" y1="257.5" x2="305" y2="257.5" stroke="#000"/><line x1="303" y1="240.5" x2="305" y2="240.5" stroke="#000"/><line x1="303" y1="222.5" x2="305" y2="222.5" stroke="#000"/><line x1="303" y1="205.5" x2="305" y2="205.5" stroke="#000"/><line x1="303" y1="188.5" x2="308" y2="188.5" stroke="#000"/><line x1="303" y1="170.5" x2="305" y2="170.5" stroke="#000"/><line x1="303" y1="153.5" x2="305" y2="153.5" stroke="#000"/><line x1="303" y1="135.5" x2="305" y2="135.5" stroke="#000"/><line x1="332.5" y1="662" x2="332.5" y2="666" stroke="#000"/><line x1="362.5" y1="662" x2="362.5" y2="666" stroke="#000"/><line x1="392.5" y1="662" x2="392.5" y2="666" stroke="#000"/><line x1="422.5" y1="662" x2="422.5" y2="666" stroke="#000"/><line x1="451.5" y1="662" x2="451.5" y2="666" stroke="#000"/><line x1="481.5" y1="662" x2="481.5" y2="666" stroke="#000"/><line x1="511.5" y1="662" x2="511.5" y2="666" stroke="#000"/><line x1="541.5" y1="662" x2="541.5" y2="666" stroke="#000"/><line x1="571.5" y1="662" x2="571.5" y2="666" stroke="#000"/><line x1="601.5" y1="662" x2="601.5" y2="666" stroke="#000"/><line x1="631.5" y1="662" x2="631.5" y2="666" stroke="#000"/><line x1="660.5" y1="662" x2="660.5" y2="666" stroke="#000"/><line x1="690.5" y1="662" x2="690.5" y2="666" stroke="#000"/><line x1="720.5" y1="662" x2="720.5" y2="666" stroke="#000"/><line x1="750.5" y1="662" x2="750.5" y2="666" stroke="#000"/><line x1="780.5" y1="662" x2="780.5" y2="666" stroke="#000"/><line x1="810.5" y1="662" x2="810.5" y2="666" stroke="#000"/><line x1="840.5" y1="662" x2="840.5" y2="666" stroke="#000"/><line x1="870.5" y1="662" x2="870.5" y2="666" stroke="#000"/><line x1="899.5" y1="662" x2="899.5" y2="666" stroke="#000"/><line x1="929.5" y1="662" x2="929.5" y2="666" stroke="#000"/><line x1="959.5" y1="662" x2="959.5" y2="666" stroke="#000"/><line x1="989.5" y1="662" x2="989.5" y2="666" stroke="#000"/><line x1="1019.5" y1="662" x2="1019.5" y2="666" stroke="#000"/><line x1="1049.5" y1="662" x2="1049.5" y2="666" stroke="#000"/><line x1="1079.5" y1="662" x2="1079.5" y2="666" stroke="#000"/><line x1="1109.5" y1="662" x2="1109.5" y2="666" stroke="#000"/><line x1="1138.5" y1="662" x2="1138.5" y2="666" stroke="#000"/><line x1="1168.5" y1="662" x2="1168.5" y2="666" stroke="#000"/><line x1="1198.5" y1="662" x2="1198.5" y2="666" stroke="#000"/><line x1="1228.5" y1="662" x2="1228.5" y2="666" stroke="#000"/><line x1="308" y1="537" x2="315" y2="537" stroke="#ff0000" stroke-width="2"/></g>
<g font-family="Liberation Sans" font-size="10.6" fill="#111"><text x="296" y="192.9" text-anchor="end">10</text><text x="296" y="280.1" text-anchor="end">7,5</text><text x="296" y="367.2" text-anchor="end">5</text><text x="296" y="454.4" text-anchor="end">2,5</text><text x="296" y="541.6" text-anchor="end">0</text><text x="296" y="628.8" text-anchor="end">-2,5</text><text x="328.0" y="674.2" font-size="11.1" transform="rotate(59 328.0 674.2)">01.01.2014</text><text x="357.9" y="674.2" font-size="11.1" transform="rotate(59 357.9 674.2)">02.01.2014</text><text x="387.7" y="674.2" font-size="11.1" transform="rotate(59 387.7 674.2)">03.01.2014</text><text x="417.6" y="674.2" font-size="11.1" transform="rotate(59 417.6 674.2)">04.01.2014</text><text x="447.5" y="674.2" font-size="11.1" transform="rotate(59 447.5 674.2)">05.01.2014</text><text x="477.4" y="674.2" font-size="11.1" transform="rotate(59 477.4 674.2)">06.01.2014</text><text x="507.2" y="674.2" font-size="11.1" transform="rotate(59 507.2 674.2)">07.01.2014</text><text x="537.1" y="674.2" font-size="11.1" transform="rotate(59 537.1 674.2)">08.01.2014</text><text x="567.0" y="674.2" font-size="11.1" transform="rotate(59 567.0 674.2)">09.01.2014</text><text x="596.8" y="674.2" font-size="11.1" transform="rotate(59 596.8 674.2)">10.01.2014</text><text x="626.7" y="674.2" font-size="11.1" transform="rotate(59 626.7 674.2)">11.01.2014</text><text x="656.6" y="674.2" font-size="11.1" transform="rotate(59 656.6 674.2)">12.01.2014</text><text x="686.4" y="674.2" font-size="11.1" transform="rotate(59 686.4 674.2)">13.01.2014</text><text x="716.3" y="674.2" font-size="11.1" transform="rotate(59 716.3 674.2)">14.01.2014</text><text x="746.2" y="674.2" font-size="11.1" transform="rotate(59 746.2 674.2)">15.01.2014</text><text x="776.1" y="674.2" font-size="11.1" transform="rotate(59 776.1 674.2)">16.01.2014</text><text x="805.9" y="674.2" font-size="11.1" transform="rotate(59 805.9 674.2)">17.01.2014</text><text x="835.8" y="674.2" font-size="11.1" transform="rotate(59 835.8 674.2)">18.01.2014</text><text x="865.7" y="674.2" font-size="11.1" transform="rotate(59 865.7 674.2)">19.01.2014</text><text x="895.5" y="674.2" font-size="11.1" transform="rotate(59 895.5 674.2)">20.01.2014</text><text x="925.4" y="674.2" font-size="11.1" transform="rotate(59 925.4 674.2)">21.01.2014</text><text x="955.3" y="674.2" font-size="11.1" transform="rotate(59 955.3 674.2)">22.01.2014</text><text x="985.1" y="674.2" font-size="11.1" transform="rotate(59 985.1 674.2)">23.01.2014</text><text x="1015.0" y="674.2" font-size="11.1" transform="rotate(59 1015.0 674.2)">24.01.2014</text><text x="1044.9" y="674.2" font-size="11.1" transform="rotate(59 1044.9 674.2)">25.01.2014</text><text x="1074.8" y="674.2" font-size="11.1" transform="rotate(59 1074.8 674.2)">26.01.2014</text><text x="1104.6" y="674.2" font-size="11.1" transform="rotate(59 1104.6 674.2)">27.01.2014</text><text x="1134.5" y="674.2" font-size="11.1" transform="rotate(59 1134.5 674.2)">28.01.2014</text><text x="1164.4" y="674.2" font-size="11.1" transform="rotate(59 1164.4 674.2)">29.01.2014</text><text x="1194.2" y="674.2" font-size="11.1" transform="rotate(59 1194.2 674.2)">30.01.2014</text><text x="1224.1" y="674.2" font-size="11.1" transform="rotate(59 1224.1 674.2)">31.01.2014</text></g>
<text x="262.7" y="536.6" transform="rotate(-90 262.7 536.6)" font-family="Liberation Sans" font-size="16.4" fill="#000">Vyrobená/spotrebovaná energia [kWh]</text>
<text x="0" y="0" transform="translate(528.2 110.2) scale(1.104 1)" font-family="Liberation Sans" font-size="15.6" font-weight="bold" fill="#000">Vyrobená/spotrebovaná energia za mesiac marec v kWh</text>
<g><rect x="697.5" y="145.5" width="165" height="158.5" fill="#fff" fill-opacity="0.92" stroke="#a0a0a0"/><rect x="712.5" y="153.50" width="22" height="12" fill="#1cd01c" fill-opacity="0.88" stroke="#00ff00" stroke-width="1.2"/><text x="746.3" y="163.50" font-family="Liberation Sans" font-size="12.3" fill="#000">Západné panely</text><rect x="712.5" y="175.45" width="22" height="12" fill="#1fa01f" fill-opacity="0.88" stroke="#00ff00" stroke-width="1.2"/><text x="746.3" y="185.45" font-family="Liberation Sans" font-size="12.3" fill="#000">Južné panely</text><rect x="712.5" y="197.40" width="22" height="12" fill="#1d761d" fill-opacity="0.88" stroke="#00ff00" stroke-width="1.2"/><text x="746.3" y="207.40" font-family="Liberation Sans" font-size="12.3" fill="#000">Otočné panely</text><rect x="712.5" y="219.35" width="22" height="12" fill="#17ff17" fill-opacity="0.88" stroke="#00ff00" stroke-width="1.2"/><text x="746.3" y="229.35" font-family="Liberation Sans" font-size="12.3" fill="#000">Veterná elektráreň</text><rect x="712.5" y="241.30" width="22" height="12" fill="#ff1717" fill-opacity="0.88" stroke="#ff0000" stroke-width="1.2"/><text x="746.3" y="251.30" font-family="Liberation Sans" font-size="12.3" fill="#000">Menič 1</text><rect x="712.5" y="263.25" width="22" height="12" fill="#ff5151" fill-opacity="0.88" stroke="#ff0000" stroke-width="1.2"/><text x="746.3" y="273.25" font-family="Liberation Sans" font-size="12.3" fill="#000">Menič 2</text><rect x="712.5" y="285.20" width="22" height="12" fill="#ff8b8b" fill-opacity="0.88" stroke="#ff0000" stroke-width="1.2"/><text x="746.3" y="295.20" font-family="Liberation Sans" font-size="12.3" fill="#000">DC 24V</text></g>
</svg>

<div class="a" id="status">Connected to COM4 : 9600, 8, None, 1, None</div>
<div class="a" id="botline"></div>
</body></html>
